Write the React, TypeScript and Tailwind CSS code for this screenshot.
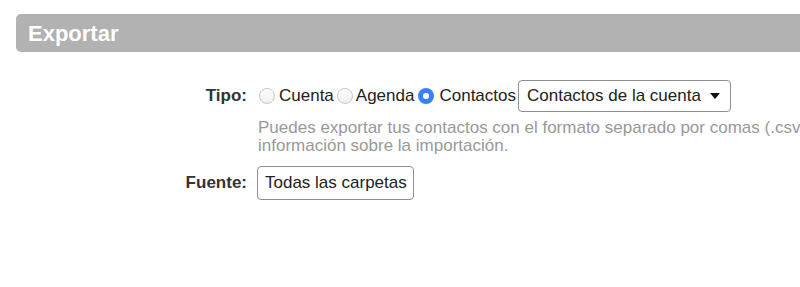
import React from "react";

function Radio({ checked }: { checked?: boolean }) {
  if (checked) {
    return (
      <span className="flex h-[16px] w-[16px] shrink-0 items-center justify-center rounded-full bg-[#3a80f6]">
        <span className="h-[6px] w-[6px] rounded-full bg-white" />
      </span>
    );
  }
  return (
    <span className="block h-[16px] w-[16px] shrink-0 rounded-full border border-[#c8c8c8] bg-gradient-to-b from-white to-[#f0f0f0]" />
  );
}

export default function App() {
  return (
    <div
      className="h-[287px] w-[800px] overflow-hidden bg-white text-[#222]"
      style={{ fontFamily: '"Liberation Sans", Arial, sans-serif' }}
    >
      <div className="pt-[14px] pl-[16px]">
        <div className="flex h-[38px] items-center rounded-l-[5px] bg-[#b2b2b2] pl-[12px]">
          <span className="text-[22px] font-bold text-white">Exportar</span>
        </div>
      </div>

      <div className="mt-[28px] grid grid-cols-[247px_1fr] gap-x-[11px]">
        <div className="flex h-[32px] items-center justify-end text-[17px] font-bold text-[#333]">
          Tipo:
        </div>
        <div className="min-w-0">
          <div className="flex h-[32px] items-center text-[17px] whitespace-nowrap">
            <span className="ml-[1px] flex items-center"><Radio /></span>
            <span className="ml-[4px]">Cuenta</span>
            <span className="ml-[3px] flex items-center"><Radio /></span>
            <span className="ml-[3px]">Agenda</span>
            <span className="ml-[4px] flex items-center"><Radio checked /></span>
            <span className="ml-[5px]">Contactos</span>
            <div className="ml-[2px] flex h-[32px] w-[213px] items-center justify-between rounded-[4px] border border-[#8f8f8f] pl-[8px] pr-[10px]">
              <span className="text-[17px]">Contactos de la cuenta</span>
              <svg width="10" height="6" viewBox="0 0 10 6">
                <path d="M0 0 L10 0 L5 6 Z" fill="#111" />
              </svg>
            </div>
          </div>
          <div className="mt-[7px] text-[17px] leading-[18px] whitespace-nowrap text-[#999]">
            Puedes exportar tus contactos con el formato separado por comas (.csv) para usarlos en otras aplicaciones. Más
            <br />
            información sobre la importación.
          </div>
        </div>

        <div className="mt-[11px] flex h-[34px] items-center justify-end text-[17px] font-bold text-[#333]">
          Fuente:
        </div>
        <div className="mt-[11px] -ml-[1px]">
          <div className="flex h-[34px] w-[157px] items-center rounded-[4px] border border-[#8f8f8f] pl-[7px] text-[17px] whitespace-nowrap">
            Todas las carpetas
          </div>
        </div>
      </div>
    </div>
  );
}
